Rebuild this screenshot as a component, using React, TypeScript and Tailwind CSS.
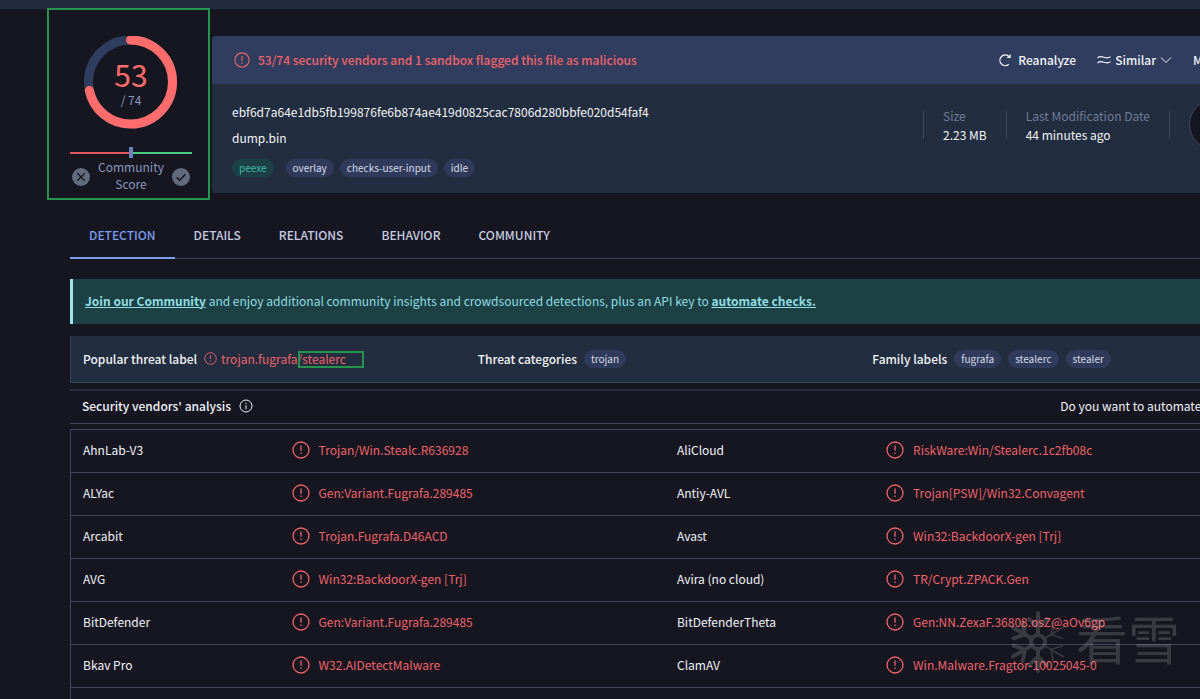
import type { ReactNode } from 'react';

type Detection = { vendor: string; result: string };

const detections: [Detection, Detection][] = [
  [{ vendor: 'AhnLab-V3', result: 'Trojan/Win.Stealc.R636928' }, { vendor: 'AliCloud', result: 'RiskWare:Win/Stealerc.1c2fb08c' }],
  [{ vendor: 'ALYac', result: 'Gen:Variant.Fugrafa.289485' }, { vendor: 'Antiy-AVL', result: 'Trojan[PSW]/Win32.Convagent' }],
  [{ vendor: 'Arcabit', result: 'Trojan.Fugrafa.D46ACD' }, { vendor: 'Avast', result: 'Win32:BackdoorX-gen [Trj]' }],
  [{ vendor: 'AVG', result: 'Win32:BackdoorX-gen [Trj]' }, { vendor: 'Avira (no cloud)', result: 'TR/Crypt.ZPACK.Gen' }],
  [{ vendor: 'BitDefender', result: 'Gen:Variant.Fugrafa.289485' }, { vendor: 'BitDefenderTheta', result: 'Gen:NN.ZexaF.36808.osZ@aOv6gp' }],
  [{ vendor: 'Bkav Pro', result: 'W32.AIDetectMalware' }, { vendor: 'ClamAV', result: 'Win.Malware.Fragtor-10025045-0' }],
  [{ vendor: '', result: '' }, { vendor: '', result: '' }],
];

const tabs = ['DETECTION', 'DETAILS', 'RELATIONS', 'BEHAVIOR', 'COMMUNITY'];

function AlertIcon({ className = '' }: { className?: string }) {
  return (
    <svg viewBox="0 0 18 18" fill="none" stroke="currentColor" strokeWidth="1.3" className={`shrink-0 ${className}`}>
      <circle cx="9" cy="9" r="8" />
      <path d="M9 4.6v5.2M9 11.6v1.5" />
    </svg>
  );
}

function InfoIcon() {
  return (
    <svg viewBox="0 0 14 14" fill="none" stroke="currentColor" className="size-[14px] shrink-0">
      <circle cx="7" cy="7" r="6" />
      <path d="M7 6.2v4M7 3.8v1.2" />
    </svg>
  );
}

function ChevronIcon() {
  return (
    <svg viewBox="0 0 12 8" fill="none" stroke="currentColor" className="h-2 w-3 shrink-0">
      <path d="M1 1.5l5 5 5-5" />
    </svg>
  );
}

function ReanalyzeIcon() {
  return (
    <svg viewBox="0 0 14 14" fill="none" stroke="currentColor" strokeWidth="1.3" className="size-[14px] shrink-0">
      <path d="M10.8 11.2A5.3 5.3 0 1 1 10.6 3.2" />
      <path d="M8.6 5h4V1z" fill="currentColor" stroke="none" />
    </svg>
  );
}

function SimilarIcon() {
  return (
    <svg viewBox="0 0 14 10" fill="none" stroke="currentColor" strokeWidth="1.1" className="h-[10px] w-[14px] shrink-0">
      <path d="M.5 3C2.5 1 4.5 1.4 7 2.3s4.5 1.2 6.5-.6" />
      <path d="M.5 8C2.5 6 4.5 6.4 7 7.3s4.5 1.2 6.5-.6" />
    </svg>
  );
}

function Pill({ children, teal = false }: { children: ReactNode; teal?: boolean }) {
  return (
    <a
      href="#"
      className={`flex h-[18px] items-center rounded-full px-[7px] text-[10px] ${teal ? 'mr-[6px] bg-[#1b4146] text-[#45b8ab]' : 'bg-[#303b5c] text-[#d5dbea]'}`}
    >
      {children}
    </a>
  );
}

function ScoreGauge() {
  const length = 2 * Math.PI * 42;
  const arc = (length * 53) / 74;
  return (
    <div className="relative size-[94px]">
      <svg viewBox="0 0 94 94" fill="none" strokeWidth="9" className="size-full">
        <circle cx="46.5" cy="46" r="42" stroke="#303d5e" />
        <circle
          cx="46.5"
          cy="46"
          r="42"
          stroke="#ff6c6b"
          strokeLinecap="round"
          strokeDasharray={`${arc} ${length}`}
          transform="rotate(-90 46.5 46)"
        />
      </svg>
      <div className="absolute inset-0 flex flex-col items-center pt-[22px]">
        <span className="text-[30px] leading-8 text-[#ff6c6b]">53</span>
        <span className="text-xs leading-5 text-[#8c97bb]">/ 74</span>
      </div>
    </div>
  );
}

function CommunityScore() {
  return (
    <div className="relative flex w-[122px] shrink-0 flex-col items-center">
      <ScoreGauge />
      <div className="mt-[17px] flex h-[11px] w-full items-center">
        <div className="h-[2px] flex-1 bg-[#e0585b]" />
        <div className="h-[11px] w-1 bg-[#6f83ba]" />
        <div className="h-[2px] flex-1 bg-[#4cc983]" />
      </div>
      <div className="flex w-full items-center justify-between px-[2px] text-[#8c97bb]">
        <button aria-label="Vote down" className="mt-1">
          <svg viewBox="0 0 18 18" className="size-[18px]">
            <circle cx="9" cy="9" r="9" fill="#626a7d" />
            <path d="M5.3 5.3l7.4 7.4M12.7 5.3l-7.4 7.4" stroke="#161621" strokeWidth="1.3" />
          </svg>
        </button>
        <span className="text-center text-xs leading-[17px]">
          Community
          <br />
          Score
        </span>
        <button aria-label="Vote up" className="mt-1">
          <svg viewBox="0 0 18 18" className="size-[18px]">
            <circle cx="9" cy="9" r="9" fill="#626a7d" />
            <path d="M4.6 9.2l3 3 5.8-6" fill="none" stroke="#161621" strokeWidth="1.5" />
          </svg>
        </button>
      </div>
      <div className="pointer-events-none absolute -top-7 -right-[18px] -bottom-2 -left-[23px] border-2 border-[#25944d]" />
    </div>
  );
}

function Fact({ label, value }: { label: string; value: string }) {
  return (
    <div className="whitespace-nowrap leading-[19px]">
      <div className="text-[#6f7b99]">{label}</div>
      <div>{value}</div>
    </div>
  );
}

function FileCard() {
  return (
    <section className="flex-1 overflow-hidden rounded-sm bg-[#222d3f]">
      <div className="flex h-12 items-center gap-[21px] bg-[#303d5f] px-[22px] font-medium">
        <p className="flex flex-1 items-center gap-2 text-[#f0636a]">
          <AlertIcon className="size-4" />
          53/74 security vendors and 1 sandbox flagged this file as malicious
        </p>
        <button className="flex items-center gap-[6px]">
          <ReanalyzeIcon />
          Reanalyze
        </button>
        <button className="flex items-center gap-1">
          <SimilarIcon />
          Similar
          <ChevronIcon />
        </button>
        <button className="flex items-center gap-1">
          More
          <ChevronIcon />
        </button>
      </div>
      <div className="flex items-start justify-between px-5 pt-[15px] pb-4">
        <div className="mt-[3px] leading-5">
          <div>ebf6d7a64e1db5fb199876fe6b874ae419d0825cac7806d280bbfe020d54faf4</div>
          <div className="mt-[6px]">dump.bin</div>
          <div className="mt-[11px] flex gap-[6px]">
            <Pill teal>peexe</Pill>
            <Pill>overlay</Pill>
            <Pill>checks-user-input</Pill>
            <Pill>idle</Pill>
          </div>
        </div>
        <div className="flex items-center gap-[19px]">
          <div className="h-7 w-px bg-[#3c475e]" />
          <Fact label="Size" value="2.23 MB" />
          <div className="h-7 w-px bg-[#3c475e]" />
          <Fact label="Last Modification Date" value="44 minutes ago" />
          <div className="h-7 w-px bg-[#3c475e]" />
          <div className="size-[51px] rounded-full border border-[#3c475e] bg-[#161621]" />
        </div>
      </div>
    </section>
  );
}

function ThreatLabels() {
  return (
    <section className="mt-3 grid h-[47px] grid-cols-3 gap-5 border border-[#35475c] border-t-[#222d3f] bg-[#222d3f] px-3 pb-[2px]">
      <div className="flex items-center gap-[7px]">
        <h3 className="font-medium">Popular threat label</h3>
        <span className="flex items-center gap-1 text-[#f0636a]">
          <AlertIcon className="size-[13px]" />
          <span>
            trojan.fugrafa
            <span className="relative">
              /stealerc
              <span className="pointer-events-none absolute top-px -right-[18px] -bottom-px left-0 border-2 border-[#25944d]" />
            </span>
          </span>
        </span>
      </div>
      <div className="flex items-center gap-[7px]">
        <h3 className="font-medium">Threat categories</h3>
        <Pill>trojan</Pill>
      </div>
      <div className="flex items-center gap-[7px]">
        <h3 className="font-medium">Family labels</h3>
        <Pill>fugrafa</Pill>
        <Pill>stealerc</Pill>
        <Pill>stealer</Pill>
      </div>
    </section>
  );
}

function DetectionCells({ vendor, result }: Detection) {
  return (
    <>
      <td className="pb-[2px] pl-3">{vendor}</td>
      <td className="pb-[2px] pl-[13px] text-[#f0636a]">
        <span className="flex items-center gap-[9px]">
          <AlertIcon className="size-[18px]" />
          {result}
        </span>
      </td>
    </>
  );
}

function Watermark() {
  return (
    <div className="pointer-events-none absolute right-5 bottom-[25px] flex items-start gap-2 text-white opacity-15">
      <svg viewBox="0 0 60 64" fill="none" stroke="currentColor" strokeWidth="4" strokeLinecap="round" className="h-16 w-[60px]">
        <circle cx="30" cy="32" r="7" />
        {[0, 60, 120, 180, 240, 300].map((angle) => (
          <path
            key={angle}
            d="M30 25V3M21 9l9 8 9-8"
            strokeWidth={angle === 60 || angle === 120 ? 1.5 : 4}
            transform={`rotate(${angle} 30 32)`}
          />
        ))}
      </svg>
      <span className="text-[52px] leading-[56px]">看雪</span>
    </div>
  );
}

export default function App() {
  return (
    <div className="relative h-screen overflow-hidden bg-[#161621] font-['Noto_Sans_CJK_SC',sans-serif] text-xs text-[#f1f3f9]">
      <div className="h-[9px] bg-[#242b40]" />
      <main className="-mr-[60px] pt-[27px] pl-[70px]">
        <div className="flex items-start gap-5">
          <CommunityScore />
          <FileCard />
        </div>

        <nav className="mt-5 flex border-b border-[#3f3f55] font-medium">
          {tabs.map((tab, i) => (
            <a
              key={tab}
              href="#"
              className={`-mb-px flex h-[46px] items-center border-b-2 px-[19px] ${i === 0 ? 'border-[#7c9df0] text-[#7c9df0]' : 'border-transparent text-[#c6cbe0]'}`}
            >
              {tab}
            </a>
          ))}
        </nav>

        <p className="mt-5 flex h-[45px] items-center border-l-3 border-[#a3e3e6] bg-[#1d4044] pb-[2px] pl-3 text-[#8fdde0]">
          <span>
            <a href="#" className="font-bold underline">Join our Community</a> and enjoy additional community insights and
            crowdsourced detections, plus an API key to <a href="#" className="font-bold underline">automate checks.</a>
          </span>
        </p>

        <ThreatLabels />

        <div className="mt-[6px] flex h-[35px] items-center justify-between border-t-2 border-b border-t-[#2a2a3b] border-b-[#45455c] px-3 pb-[2px]">
          <h2 className="flex items-center gap-2 font-medium">
            Security vendors' analysis
            <InfoIcon />
          </h2>
          <a href="#">Do you want to automate checks?</a>
        </div>

        <table className="mt-[5px] w-full table-fixed border-collapse border border-[#45435f] text-left">
          <colgroup>
            <col className="w-[17.5%]" />
            <col className="w-[32.5%]" />
            <col className="w-[17.5%]" />
            <col className="w-[32.5%]" />
          </colgroup>
          <tbody>
            {detections.map(([left, right], i) => (
              <tr key={i} className="h-[43px] border-b border-[#45435f]">
                <DetectionCells {...left} />
                <DetectionCells {...right} />
              </tr>
            ))}
          </tbody>
        </table>
      </main>
      <Watermark />
    </div>
  );
}
